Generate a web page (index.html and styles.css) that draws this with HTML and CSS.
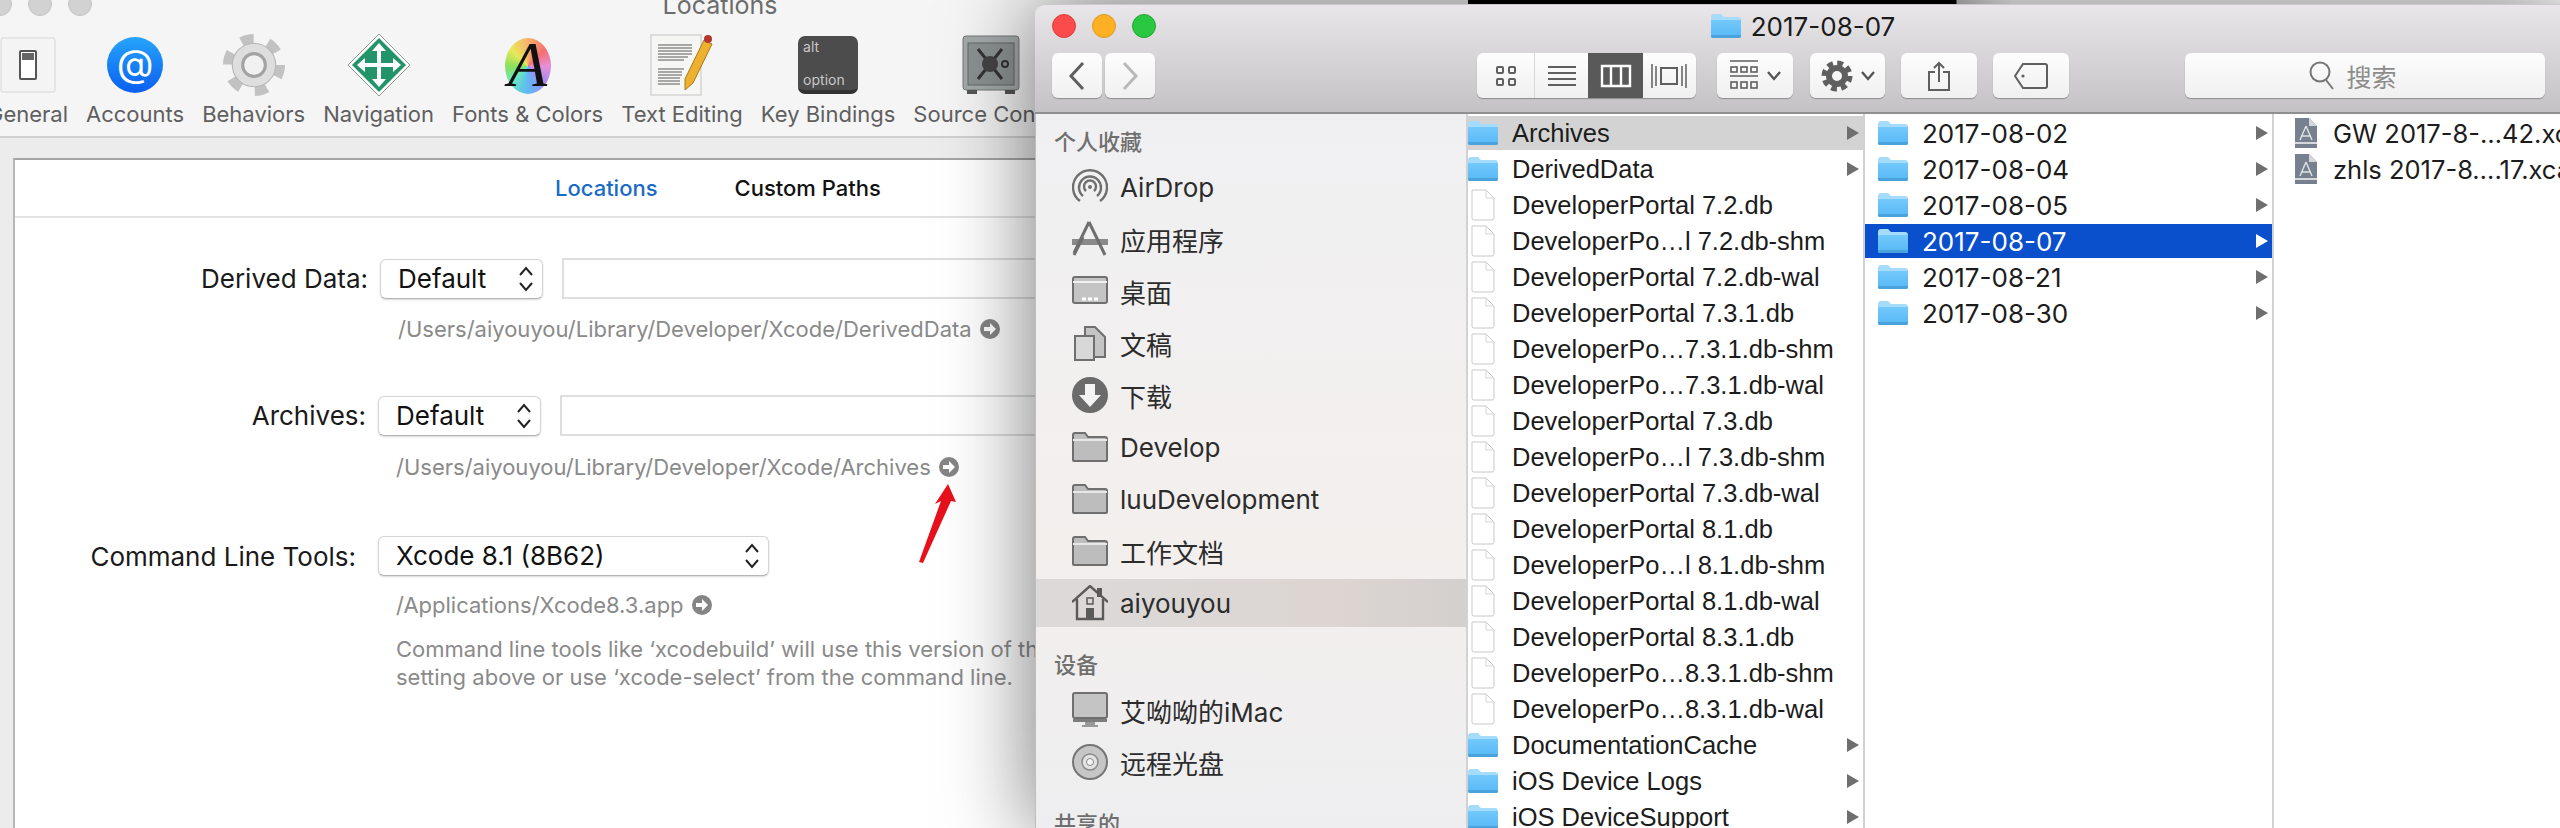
FILE: index.html
```html
<!DOCTYPE html>
<html>
    <head>
        <meta charset="utf-8">
        <title>Locations - Finder</title>
        <link rel="stylesheet" href="styles.css">
    </head>
    <body>
        <svg class="sprites" aria-hidden="true">
            <defs>
                <linearGradient id="folderFill" x1="0" y1="0" x2="0" y2="1">
                    <stop offset="0" stop-color="#74c9fc"/>
                    <stop offset="1" stop-color="#56b7f6"/>
                </linearGradient>
            </defs>
            <symbol id="folder" viewBox="0 0 30 24">
                <path d="M0 3q0-3 3-3h7l3 3h14q3 0 3 3v16q0 2-2 2H2q-2 0-2-2z" fill="#a5dbfb"/>
                <path d="M0 6h30v16q0 2-2 2H2q-2 0-2-2z" fill="url(#folderFill)"/>
                <path d="M0 22q0 2 2 2h26q2 0 2-2v-1H0z" fill="#4aa3dd"/>
            </symbol>
            <symbol id="doc" viewBox="0 0 24 32">
                <path d="M1 1h14l8 8v20q0 2-2 2H3q-2 0-2-2z" fill="#fff" stroke="#c9c9c9"/>
                <path d="M15 1v8h8" fill="none" stroke="#d5d5d5"/>
            </symbol>
            <symbol id="archive" viewBox="0 0 22 30">
                <path d="M0 0h14l8 8v22H0z" fill="#77808f"/>
                <path d="M14 0v8h8z" fill="#d3d6db"/>
                <path d="M0 24h22v2H0z" fill="#d5d8dd"/>
                <path d="M11 8l-6 14M11 8l6 14M6 18h10" fill="none" stroke="#dfe2e6" stroke-width="1.4"/>
            </symbol>
            <symbol id="go" viewBox="0 0 20 20">
                <circle cx="10" cy="10" r="10" fill="#858585"/>
                <path d="M4 8h6V4l6 6-6 6v-4H4z" fill="#fff"/>
            </symbol>
            <symbol id="updown" viewBox="0 0 16 28">
                <path d="M2 10l6-7 6 7M2 18l6 7 6-7" fill="none" stroke="#222" stroke-width="2"/>
            </symbol>
            <symbol id="sfolder" viewBox="0 0 36 30">
                <path d="M1 28V3q0-2 2-2h10l3 4h17q2 0 2 2v21q0 1-1 1H2q-1 0-1-1z" fill="#bdbdbd" stroke="#6f6f6f" stroke-width="2"/>
                <path d="M1 8h34" stroke="#e8e8e8" stroke-width="2"/>
            </symbol>
        </svg>

        <div class="desktop">
            <div class="top-strip"></div>

            <!-- Xcode preferences, behind -->
            <div class="prefs">
                <div class="prefs-title">
                    <div class="dots"><i></i><i></i><i></i></div>
                    <span>Locations</span>
                </div>
                <div class="tools">
                    <div class="tool">
                        <div class="tool-icon">
                            <svg width="56" height="56" viewBox="0 0 56 56">
                                <rect x="1" y="1" width="54" height="54" rx="2" fill="#f4f4f4" stroke="#d6d6d6"/>
                                <rect x="20" y="14" width="16" height="28" rx="1" fill="#fff" stroke="#555" stroke-width="2"/>
                                <rect x="22" y="16" width="12" height="7" fill="#666"/>
                            </svg>
                        </div>
                        <span>General</span>
                    </div>
                    <div class="tool">
                        <div class="tool-icon">
                            <div class="at-badge">@</div>
                        </div>
                        <span>Accounts</span>
                    </div>
                    <div class="tool">
                        <div class="tool-icon">
                            <svg width="62" height="62" viewBox="0 0 60 60">
                                <circle cx="30" cy="30" r="25" fill="none" stroke="#c2c2c2" stroke-width="10" stroke-dasharray="12 14.18"/>
                                <circle cx="30" cy="30" r="21" fill="#dedede" stroke="#b5b5b5"/>
                                <circle cx="30" cy="30" r="11" fill="#f1f1f1" stroke="#a3a3a3" stroke-width="3"/>
                            </svg>
                        </div>
                        <span>Behaviors</span>
                    </div>
                    <div class="tool">
                        <div class="tool-icon">
                            <svg width="64" height="64" viewBox="0 0 64 64">
                                <path d="M32 1l31 31-31 31L1 32z" fill="#fff" stroke="#8a9a92"/>
                                <path d="M32 5l27 27-27 27L5 32z" fill="#23946a"/>
                                <path d="M32 10l7 8h-5v12h12v-5l8 7-8 7v-5H34v12h5l-7 8-7-8h5V34H18v5l-8-7 8-7v5h12V18h-5z" fill="#fff"/>
                            </svg>
                        </div>
                        <span>Navigation</span>
                    </div>
                    <div class="tool">
                        <div class="tool-icon">
                            <div class="color-wheel"><b>A</b></div>
                        </div>
                        <span>Fonts &amp; Colors</span>
                    </div>
                    <div class="tool">
                        <div class="tool-icon">
                            <svg width="64" height="64" viewBox="0 0 64 64">
                                <rect x="1" y="2" width="50" height="60" fill="#f6f6f4" stroke="#c4c4c4"/>
                                <path d="M8 12h34M8 15h34M8 18h34M8 21h34M8 24h30M8 27h26M8 36h26M8 39h24M8 42h24M8 45h22M8 48h22M8 51h22" stroke="#8d8d8d" stroke-width="1.5"/>
                                <path d="M54 7l8 4-19 39-8 7 0-11z" fill="#eeb02f" stroke="#a87a1d"/>
                                <circle cx="58" cy="6" r="4" fill="#b5382f"/>
                            </svg>
                        </div>
                        <span>Text Editing</span>
                    </div>
                    <div class="tool">
                        <div class="tool-icon">
                            <div class="key-cap"><span>alt</span><span>option</span></div>
                        </div>
                        <span>Key Bindings</span>
                    </div>
                    <div class="tool">
                        <div class="tool-icon">
                            <svg width="58" height="60" viewBox="0 0 58 60">
                                <rect x="1" y="1" width="56" height="54" rx="3" fill="#a4aaaa" stroke="#777"/>
                                <rect x="6" y="8" width="46" height="42" fill="#8c9292" stroke="#666"/>
                                <path d="M16 14l24 30M40 14L16 44" stroke="#333" stroke-width="3"/>
                                <circle cx="28" cy="29" r="8" fill="#444"/>
                                <circle cx="43" cy="29" r="3" fill="none" stroke="#333" stroke-width="2"/>
                                <rect x="5" y="55" width="10" height="4" fill="#555"/>
                                <rect x="43" y="55" width="10" height="4" fill="#555"/>
                            </svg>
                        </div>
                        <span>Source Control</span>
                    </div>
                </div>
                <div class="panel-wrap">
                    <div class="panel">
                        <div class="tabs">
                            <span class="tab-on">Locations</span>
                            <span>Custom Paths</span>
                        </div>
                        <div class="form">
                            <div class="block block-data">
                                <div class="row">
                                    <label>Derived Data:</label>
                                    <div class="popup">Default<svg class="updown"><use href="#updown"/></svg></div>
                                    <div class="field"></div>
                                </div>
                                <p class="path">/Users/aiyouyou/Library/Developer/Xcode/DerivedData <svg class="go"><use href="#go"/></svg></p>
                            </div>
                            <div class="block block-archives">
                                <div class="row">
                                    <label>Archives:</label>
                                    <div class="popup">Default<svg class="updown"><use href="#updown"/></svg></div>
                                    <div class="field"></div>
                                </div>
                                <p class="path path-far">/Users/aiyouyou/Library/Developer/Xcode/Archives <svg class="go"><use href="#go"/></svg></p>
                            </div>
                            <div class="block">
                                <div class="row">
                                    <label class="label-wide">Command Line Tools:</label>
                                    <div class="popup popup-wide">Xcode 8.1 (8B62)<svg class="updown"><use href="#updown"/></svg></div>
                                </div>
                                <p class="path path-near">/Applications/Xcode8.3.app <svg class="go"><use href="#go"/></svg></p>
                                <p class="note">Command line tools like ‘xcodebuild’ will use this version of the tools by default. Change the<br>setting above or use ‘xcode-select’ from the command line.</p>
                            </div>
                        </div>
                    </div>
                </div>
                <!-- red annotation arrow -->
                <svg class="red-arrow" width="50" height="90" viewBox="0 0 50 90">
                    <path d="M38 4l8 18-5-1-28 62-4-1 22-61-6 3z" fill="#e8101c"/>
                </svg>
            </div>

            <!-- Finder, in front -->
            <div class="finder">
                <div class="titlebar">
                    <div class="lights"><i class="red"></i><i class="amber"></i><i class="green"></i></div>
                    <div class="win-title"><svg class="title-folder"><use href="#folder"/></svg>2017-08-07</div>
                    <div class="toolbar">
                        <div class="nav">
                            <div class="btn nav-btn">
                                <svg width="18" height="30" viewBox="0 0 18 30"><path d="M15 2L3 15l12 13" fill="none" stroke="#5f5f5f" stroke-width="3"/></svg>
                            </div>
                            <div class="btn nav-btn">
                                <svg width="18" height="30" viewBox="0 0 18 30"><path d="M3 2l12 13L3 28" fill="none" stroke="#b9b9b9" stroke-width="3"/></svg>
                            </div>
                        </div>
                        <div class="btn views">
                            <div class="view view-first">
                                <svg width="22" height="22" viewBox="0 0 22 22"><g fill="none" stroke="#5f5f5f" stroke-width="2"><rect x="2" y="2" width="6" height="6" rx="1"/><rect x="14" y="2" width="6" height="6" rx="1"/><rect x="2" y="14" width="6" height="6" rx="1"/><rect x="14" y="14" width="6" height="6" rx="1"/></g></svg>
                            </div>
                            <div class="view">
                                <svg width="28" height="22" viewBox="0 0 28 22"><path d="M0 2h28M0 8h28M0 14h28M0 20h28" stroke="#5f5f5f" stroke-width="2"/></svg>
                            </div>
                            <div class="view view-on">
                                <svg width="32" height="24" viewBox="0 0 32 24"><path d="M2 2h28v20H2zM11 2v20M21 2v20" fill="none" stroke="#fff" stroke-width="2.4"/></svg>
                            </div>
                            <div class="view">
                                <svg width="36" height="24" viewBox="0 0 36 24"><path d="M1 0v24M5 2v20M31 2v20M35 0v24" stroke="#5f5f5f" stroke-width="1.5"/><rect x="10" y="4" width="16" height="16" fill="none" stroke="#5f5f5f" stroke-width="2"/></svg>
                            </div>
                        </div>
                        <div class="btn arrange">
                            <svg width="28" height="32" viewBox="0 0 28 32"><g fill="none" stroke="#5f5f5f" stroke-width="1.6"><path d="M0 1h28M0 16h28"/><rect x="1" y="7" width="6" height="5"/><rect x="11" y="7" width="6" height="5"/><rect x="21" y="7" width="6" height="5"/><rect x="1" y="22" width="6" height="6"/><rect x="11" y="22" width="6" height="6"/><rect x="21" y="22" width="6" height="6"/></g></svg>
                            <svg class="chev" width="14" height="10" viewBox="0 0 14 10"><path d="M1 1l6 7 6-7" fill="none" stroke="#555" stroke-width="2.4"/></svg>
                        </div>
                        <div class="btn gear">
                            <svg width="32" height="32" viewBox="0 0 32 32">
                                <circle cx="16" cy="16" r="12" fill="none" stroke="#5f5f5f" stroke-width="7" stroke-dasharray="5.4 4"/>
                                <circle cx="16" cy="16" r="8" fill="none" stroke="#5f5f5f" stroke-width="6"/>
                            </svg>
                            <svg class="chev" width="14" height="10" viewBox="0 0 14 10"><path d="M1 1l6 7 6-7" fill="none" stroke="#555" stroke-width="2.4"/></svg>
                        </div>
                        <div class="btn tb-btn">
                            <svg width="22" height="30" viewBox="0 0 22 30"><path d="M7 11H1v18h20V11h-6M11 21V2M6 7l5-5 5 5" fill="none" stroke="#5f5f5f" stroke-width="2"/></svg>
                        </div>
                        <div class="btn tb-btn">
                            <svg width="34" height="26" viewBox="0 0 34 26"><path d="M9 1h22q2 0 2 2v20q0 2-2 2H9L1 13z" fill="none" stroke="#5f5f5f" stroke-width="2"/><circle cx="9" cy="13" r="1.6" fill="#5f5f5f"/></svg>
                        </div>
                        <div class="btn search">
                            <svg width="26" height="32" viewBox="0 0 26 32"><circle cx="11" cy="12" r="9.5" fill="none" stroke="#777" stroke-width="2"/><path d="M17 20l7 9" stroke="#777" stroke-width="2"/></svg>
                            <span>搜索</span>
                        </div>
                    </div>
                </div>

                <div class="browser">
                    <div class="sidebar">
                        <h4>个人收藏</h4>
                        <div class="side-item">
                            <svg class="side-icon" viewBox="0 0 36 36"><g fill="none" stroke="#6f6f6f" stroke-width="2.4"><path d="M8 32a17 17 0 1 1 20 0"/><path d="M11 27a11 11 0 1 1 14 0"/><path d="M14 22a6 6 0 1 1 8 0"/></g><circle cx="18" cy="18" r="2" fill="#6f6f6f"/></svg>
                            <span>AirDrop</span>
                        </div>
                        <div class="side-item">
                            <svg class="side-icon" viewBox="0 0 36 36"><path d="M0 18h36v6H0z" fill="#8a8a8a"/><path d="M17 1L2 32M17 1l16 33M11 16L2 34" fill="none" stroke="#6f6f6f" stroke-width="3"/></svg>
                            <span>应用程序</span>
                        </div>
                        <div class="side-item">
                            <svg class="side-icon" viewBox="0 0 36 30"><rect x="1" y="1" width="34" height="26" rx="2" fill="#c4c4c4" stroke="#6f6f6f" stroke-width="2"/><path d="M1 6h34" stroke="#f0f0f0" stroke-width="2"/><path d="M10 23h16" stroke="#fff" stroke-width="3" stroke-dasharray="4 2"/></svg>
                            <span>桌面</span>
                        </div>
                        <div class="side-item">
                            <svg class="side-icon" viewBox="0 0 36 36"><path d="M13 2h10l10 10v20H13z" fill="#c4c4c4" stroke="#6f6f6f" stroke-width="2"/><path d="M3 11h19v24H3z" fill="#d8d8d8" stroke="#6f6f6f" stroke-width="2"/></svg>
                            <span>文稿</span>
                        </div>
                        <div class="side-item">
                            <svg class="side-icon" viewBox="0 0 36 36"><circle cx="18" cy="18" r="18" fill="#6b6b6b"/><path d="M13 7h10v11h6L18 30 7 18h6z" fill="#f4f4f4"/></svg>
                            <span>下载</span>
                        </div>
                        <div class="side-item">
                            <svg class="side-icon"><use href="#sfolder"/></svg>
                            <span>Develop</span>
                        </div>
                        <div class="side-item">
                            <svg class="side-icon"><use href="#sfolder"/></svg>
                            <span>luuDevelopment</span>
                        </div>
                        <div class="side-item">
                            <svg class="side-icon"><use href="#sfolder"/></svg>
                            <span>工作文档</span>
                        </div>
                        <div class="side-item side-on">
                            <svg class="side-icon" viewBox="0 0 36 36"><path d="M0 17L18 1l18 16M5 14v20h26V14" fill="none" stroke="#5a5a5a" stroke-width="2.4"/><rect x="25" y="3" width="5" height="9" fill="#5a5a5a"/><rect x="15" y="13" width="6" height="6" fill="none" stroke="#5a5a5a" stroke-width="1.5"/><rect x="14" y="23" width="8" height="11" fill="#5a5a5a"/></svg>
                            <span>aiyouyou</span>
                        </div>
                        <h4 class="side-head2">设备</h4>
                        <div class="side-item">
                            <svg class="side-icon" viewBox="0 0 36 36"><rect x="1" y="1" width="34" height="25" rx="2" fill="#c4c4c4" stroke="#6f6f6f" stroke-width="2"/><path d="M1 27h34v3H1z" fill="#7d7d7d"/><path d="M13 30h10v3h3v2H10v-2h3z" fill="#9a9a9a"/></svg>
                            <span>艾呦呦的iMac</span>
                        </div>
                        <div class="side-item">
                            <svg class="side-icon" viewBox="0 0 36 36"><circle cx="18" cy="18" r="17" fill="#c6c6c6" stroke="#757575" stroke-width="2"/><circle cx="18" cy="18" r="8" fill="#e2e2e2" stroke="#8a8a8a" stroke-width="1.5"/><circle cx="18" cy="18" r="3.5" fill="#f4f4f4" stroke="#8a8a8a"/></svg>
                            <span>远程光盘</span>
                        </div>
                        <h4 class="side-head3">共享的</h4>
                    </div>

                    <ul class="col col-first">
                        <li class="open"><svg class="folder"><use href="#folder"/></svg><span>Archives</span><i class="disc"></i></li>
                        <li><svg class="folder"><use href="#folder"/></svg><span>DerivedData</span><i class="disc"></i></li>
                        <li><svg class="doc"><use href="#doc"/></svg><span>DeveloperPortal 7.2.db</span></li>
                        <li><svg class="doc"><use href="#doc"/></svg><span>DeveloperPo…l 7.2.db-shm</span></li>
                        <li><svg class="doc"><use href="#doc"/></svg><span>DeveloperPortal 7.2.db-wal</span></li>
                        <li><svg class="doc"><use href="#doc"/></svg><span>DeveloperPortal 7.3.1.db</span></li>
                        <li><svg class="doc"><use href="#doc"/></svg><span>DeveloperPo…7.3.1.db-shm</span></li>
                        <li><svg class="doc"><use href="#doc"/></svg><span>DeveloperPo…7.3.1.db-wal</span></li>
                        <li><svg class="doc"><use href="#doc"/></svg><span>DeveloperPortal 7.3.db</span></li>
                        <li><svg class="doc"><use href="#doc"/></svg><span>DeveloperPo…l 7.3.db-shm</span></li>
                        <li><svg class="doc"><use href="#doc"/></svg><span>DeveloperPortal 7.3.db-wal</span></li>
                        <li><svg class="doc"><use href="#doc"/></svg><span>DeveloperPortal 8.1.db</span></li>
                        <li><svg class="doc"><use href="#doc"/></svg><span>DeveloperPo…l 8.1.db-shm</span></li>
                        <li><svg class="doc"><use href="#doc"/></svg><span>DeveloperPortal 8.1.db-wal</span></li>
                        <li><svg class="doc"><use href="#doc"/></svg><span>DeveloperPortal 8.3.1.db</span></li>
                        <li><svg class="doc"><use href="#doc"/></svg><span>DeveloperPo…8.3.1.db-shm</span></li>
                        <li><svg class="doc"><use href="#doc"/></svg><span>DeveloperPo…8.3.1.db-wal</span></li>
                        <li><svg class="folder"><use href="#folder"/></svg><span>DocumentationCache</span><i class="disc"></i></li>
                        <li><svg class="folder"><use href="#folder"/></svg><span>iOS Device Logs</span><i class="disc"></i></li>
                        <li><svg class="folder"><use href="#folder"/></svg><span>iOS DeviceSupport</span><i class="disc"></i></li>
                    </ul>

                    <ul class="col col-second">
                        <li><svg class="folder"><use href="#folder"/></svg><span>2017-08-02</span><i class="disc"></i></li>
                        <li><svg class="folder"><use href="#folder"/></svg><span>2017-08-04</span><i class="disc"></i></li>
                        <li><svg class="folder"><use href="#folder"/></svg><span>2017-08-05</span><i class="disc"></i></li>
                        <li class="selected"><svg class="folder"><use href="#folder"/></svg><span>2017-08-07</span><i class="disc"></i></li>
                        <li><svg class="folder"><use href="#folder"/></svg><span>2017-08-21</span><i class="disc"></i></li>
                        <li><svg class="folder"><use href="#folder"/></svg><span>2017-08-30</span><i class="disc"></i></li>
                    </ul>

                    <ul class="col col-third">
                        <li><svg class="archive"><use href="#archive"/></svg><span>GW 2017-8-…42.xcarchive</span></li>
                        <li><svg class="archive"><use href="#archive"/></svg><span>zhls 2017-8….17.xcarchive</span></li>
                    </ul>
                </div>
            </div>
        </div>
    </body>
</html>
```

FILE: styles.css
```css
* {
    margin: 0;
    padding: 0;
    box-sizing: border-box;
}

html, body {
    height: 100%;
    overflow: hidden;
    background: #fff;
}

body {
    font-family: Inter, "Noto Sans CJK SC", sans-serif;
    color: #1c1c1c;
}

.sprites {
    position: absolute;
    width: 0;
    height: 0;
}

.desktop {
    position: relative;
    width: 2560px;
    height: 828px;
    overflow: hidden;
}

.top-strip {
    position: absolute;
    left: 1460px;
    top: 0;
    width: 551px;
    height: 6px;
    background: linear-gradient(90deg, #000 0, #000 496px, #c8c8c8 497px, #fff 100%);
}

/* back window */
.prefs {
    position: absolute;
    left: -28px;
    top: -10px;
    width: 1496px;
    height: 840px;
    display: flex;
    flex-direction: column;
    background: #f5f5f5;
}

.prefs-title {
    position: relative;
    height: 40px;
    text-align: center;
    font-size: 25px;
    line-height: 30px;
    color: #6c6c6c;
}

.dots {
    position: absolute;
    left: 16px;
    top: 2px;
    display: flex;
    gap: 16px;
}

.dots i {
    width: 24px;
    height: 24px;
    border-radius: 50%;
    background: #d2d2d2;
    border: 1px solid #c4c4c4;
}

.tools {
    height: 108px;
    display: flex;
    gap: 18px;
    padding-left: 15px;
    border-bottom: 2px solid #d0d0d0;
    overflow: hidden;
}

.tool {
    display: flex;
    flex-direction: column;
    align-items: center;
    flex: none;
    font-size: 22px;
    color: #5f5f5f;
}

.tool-icon {
    height: 70px;
    margin-bottom: 1px;
    display: flex;
    align-items: center;
    justify-content: center;
}

.at-badge {
    width: 56px;
    height: 56px;
    border-radius: 50%;
    background: linear-gradient(#26a4fb, #0a5ff0);
    color: #fff;
    font-size: 38px;
    line-height: 52px;
    text-align: center;
}

.color-wheel {
    width: 46px;
    height: 56px;
    margin-top: 2px;
    border-radius: 50%;
    background: conic-gradient(#f6b26b, #f56f6f, #e88fd8, #a48cf0, #5fb8f5, #66e8c0, #8de05a, #e9e85a, #f6b26b);
    text-align: center;
}

.color-wheel b {
    font-family: "Liberation Serif", serif;
    font-size: 64px;
    line-height: 54px;
    font-style: italic;
    font-weight: 400;
    color: #111;
}

.key-cap {
    width: 60px;
    height: 58px;
    padding: 2px 5px;
    border-radius: 7px;
    background: #4c4c4c;
    border-bottom: 4px solid #333;
    display: flex;
    flex-direction: column;
    justify-content: space-between;
    font-size: 14px;
    color: #c8c8c8;
}

.panel-wrap {
    flex: 1;
    padding: 20px 0 0 41px;
    background: #ececec;
}

.panel {
    height: 100%;
    background: #fff;
    border-top: 2px solid #a5a5a5;
    border-left: 2px solid #b8b8b8;
}

.tabs {
    height: 58px;
    padding-left: 540px;
    display: flex;
    align-items: center;
    gap: 77px;
    border-bottom: 2px solid #e2e2e2;
    font-size: 22px;
    font-weight: 500;
    color: #111;
}

.tab-on {
    color: #1a6ac8;
}

.form {
    padding-top: 40px;
}

.block {
    margin-bottom: 55px;
}

.block-data {
    margin-left: 2px;
    margin-bottom: 52px;
}

.row {
    display: flex;
    align-items: center;
}

.row label {
    width: 351px;
    margin-right: 12px;
    text-align: right;
    font-size: 26px;
    color: #1a1a1a;
}

.row .label-wide {
    width: 341px;
    margin-right: 22px;
}

.popup {
    position: relative;
    flex: none;
    width: 163px;
    height: 40px;
    padding-left: 17px;
    background: #fff;
    border: 1px solid #d4d4d4;
    border-bottom-color: #b5b5b5;
    border-radius: 6px;
    box-shadow: 0 1px 2px rgba(0,0,0,0.15);
    font-size: 26px;
    line-height: 37px;
    color: #111;
}

.popup-wide {
    width: 391px;
}

.updown {
    position: absolute;
    right: 8px;
    top: 5px;
    width: 16px;
    height: 28px;
}

.field {
    flex: 1;
    height: 41px;
    margin-left: 19px;
    background: #fff;
    border: 2px solid #dedede;
}

.path, .note {
    margin-left: 381px;
    font-size: 22px;
    line-height: 28px;
    color: #8a8a8a;
}

.path {
    margin-top: 16px;
    display: flex;
    align-items: center;
    gap: 8px;
}

.path-far {
    margin-top: 17px;
}

.path-near {
    margin-top: 15px;
}

.go {
    width: 20px;
    height: 20px;
}

.note {
    margin-top: 16px;
    white-space: nowrap;
}

.red-arrow {
    position: absolute;
    left: 938px;
    top: 490px;
}

/* front window */
.finder {
    position: absolute;
    left: 1035px;
    top: 4px;
    width: 1536px;
    height: 830px;
    display: flex;
    flex-direction: column;
    border-radius: 10px 10px 0 0;
    box-shadow: 0 0 90px rgba(0,0,0,0.55);
}

.titlebar {
    position: relative;
    height: 110px;
    flex: none;
    border-radius: 10px 10px 0 0;
    border-bottom: 2px solid #8f8f8f;
    border-top: 1px solid #c9c9c9;
    background: linear-gradient(#e8e6e8, #c4c2c4);
}

.lights {
    position: absolute;
    left: 17px;
    top: 9px;
    display: flex;
    gap: 16px;
}

.lights i {
    width: 24px;
    height: 24px;
    border-radius: 50%;
}

.red { background: #fc4b4b; border: 1px solid #e03c3c; }
.amber { background: #fdb024; border: 1px solid #df9a1c; }
.green { background: #2ac740; border: 1px solid #20a832; }

.win-title {
    height: 42px;
    margin-bottom: 6px;
    display: flex;
    align-items: center;
    justify-content: center;
    gap: 10px;
    font-size: 26px;
    color: #1a1a1a;
}

.title-folder {
    width: 30px;
    height: 24px;
}

.toolbar {
    display: flex;
    padding-left: 17px;
}

.btn {
    display: flex;
    align-items: center;
    justify-content: center;
    height: 45px;
    background: linear-gradient(#fdfdfd, #f0f0f0);
    border-radius: 6px;
    box-shadow: 0 1px 1px rgba(0,0,0,0.3);
}

.nav {
    display: flex;
    gap: 3px;
    margin-right: 322px;
}

.nav-btn {
    width: 50px;
}

.views {
    width: 219px;
    margin-right: 21px;
    overflow: hidden;
}

.view {
    width: 54px;
    height: 100%;
    display: flex;
    align-items: center;
    justify-content: center;
}

.view-first {
    width: 59px;
    border-right: 1px solid #d8d8d8;
}

.view-on {
    width: 55px;
    background: #595959;
}

.arrange {
    width: 76px;
    gap: 9px;
    margin-right: 17px;
}

.gear {
    width: 75px;
    gap: 8px;
    margin-right: 16px;
}

.tb-btn {
    width: 76px;
    margin-right: 16px;
}

.search {
    width: 360px;
    margin-left: 100px;
    padding-right: 24px;
    gap: 11px;
    font-size: 25px;
    color: #8c8c8c;
}

.browser {
    flex: 1;
    display: flex;
    background: #fff;
    overflow: hidden;
}

.sidebar {
    width: 433px;
    flex: none;
    background: linear-gradient(#f0f0f2, #f3efed 60%, #eeeef0);
    border-left: 1px solid #bdbdbd;
    border-right: 2px solid #d2d2d2;
}

.sidebar h4 {
    height: 28px;
    margin: 14px 0 5px 18px;
    font-size: 22px;
    line-height: 28px;
    font-weight: 500;
    color: #6f6f6f;
}

.sidebar .side-head2 {
    margin-top: 24px;
}

.sidebar .side-head3 {
    margin-top: 22px;
}

.side-item {
    height: 52px;
    display: flex;
    align-items: center;
    gap: 12px;
    padding-left: 36px;
    font-size: 26px;
    color: #2c2c2c;
}

.side-icon {
    width: 36px;
    height: 36px;
}

.side-on {
    background: linear-gradient(90deg, #dcdad9, #dcd5d2 70%, #d4d0ce);
    height: 48px;
    margin: 2px 0;
}

.col {
    list-style: none;
    flex: none;
    padding-top: 2px;
    border-right: 2px solid #d2d2d2;
}

.col-first {
    width: 397px;
}

.col-second {
    width: 409px;
}

.col-third {
    flex: 1;
    border-right: none;
}

.col li {
    position: relative;
    height: 34px;
    margin-bottom: 2px;
    display: flex;
    align-items: center;
    font-size: 26px;
    white-space: nowrap;
    color: #1c1c1c;
}

.col-first li {
    font-family: "Liberation Sans", sans-serif;
    font-size: 25.5px;
}

.col-third li {
    font-size: 25.5px;
}

.col .open {
    background: #d3d3d3;
}

.col .selected {
    background: #0a4fcb;
    color: #fff;
}

.folder {
    width: 30px;
    height: 24px;
    margin-right: 14px;
    flex: none;
}

.col-second .folder {
    margin-left: 13px;
    margin-right: 14px;
}

.doc {
    width: 24px;
    height: 32px;
    margin: 0 17px 0 3px;
    flex: none;
}

.archive {
    width: 22px;
    height: 30px;
    margin: 0 16px 0 21px;
    flex: none;
}

.disc {
    position: absolute;
    right: 4px;
    top: 10px;
    width: 0;
    height: 0;
    border-left: 12px solid #6f6f6f;
    border-top: 7px solid transparent;
    border-bottom: 7px solid transparent;
}

.selected .disc {
    border-left-color: #fff;
}
```
